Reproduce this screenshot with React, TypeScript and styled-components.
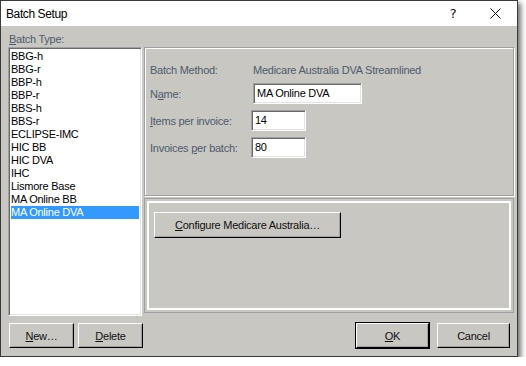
import React from "react";
import styled, { createGlobalStyle } from "styled-components";

const GlobalStyle = createGlobalStyle`
  html, body {
    margin: 0;
    padding: 0;
    background: #ffffff;
  }
  body {
    font-family: "Liberation Sans", Arial, sans-serif;
    font-size: 11px;
    letter-spacing: -0.25px;
  }
  u {
    text-decoration-thickness: 1px;
    text-underline-offset: 1px;
  }
`;

const batchTypes = [
  "BBG-h",
  "BBG-r",
  "BBP-h",
  "BBP-r",
  "BBS-h",
  "BBS-r",
  "ECLIPSE-IMC",
  "HIC BB",
  "HIC DVA",
  "IHC",
  "Lismore Base",
  "MA Online BB",
  "MA Online DVA",
];

const App = () => {
  const selected = "MA Online DVA";

  return (
    <>
      <GlobalStyle />
      <S.Window>
        <S.TitleBar>
          <S.Title>Batch Setup</S.Title>
          <S.HelpButton>?</S.HelpButton>
          <S.CloseButton>
            <svg width="11" height="11" viewBox="0 0 11 11">
              <path d="M0.5 0.5 L10.5 10.5 M10.5 0.5 L0.5 10.5" stroke="#111" strokeWidth="1" fill="none" />
            </svg>
          </S.CloseButton>
        </S.TitleBar>
        <S.Body>
          <S.FieldLabel>
            <u>B</u>atch Type:
          </S.FieldLabel>
          <S.MainRow>
            <S.ListBox>
              {batchTypes.map((t) => (
                <S.ListItem key={t} $selected={t === selected}>
                  {t}
                </S.ListItem>
              ))}
            </S.ListBox>
            <S.RightColumn>
              <S.DetailsPanel>
                <S.FormGrid>
                  <S.FormLabel>Batch Method:</S.FormLabel>
                  <S.FormValue>Medicare Australia DVA Streamlined</S.FormValue>
                  <S.FormLabel>
                    N<u>a</u>me:
                  </S.FormLabel>
                  <S.TextBox $width={109} $shift={2}>MA Online DVA</S.TextBox>
                  <S.FormLabel>
                    <u>I</u>tems per invoice:
                  </S.FormLabel>
                  <S.TextBox $width={55}>14</S.TextBox>
                  <S.FormLabel>
                    Invoices <u>p</u>er batch:
                  </S.FormLabel>
                  <S.TextBox $width={55}>80</S.TextBox>
                </S.FormGrid>
              </S.DetailsPanel>
              <S.ConfigPanel>
                <S.ConfigInner>
                  <S.Button $width={187} $height={26}>
                    <u>C</u>onfigure Medicare Australia…
                  </S.Button>
                </S.ConfigInner>
              </S.ConfigPanel>
            </S.RightColumn>
          </S.MainRow>
          <S.ButtonRow>
            <S.ButtonGroup>
              <S.Button $width={65}>
                <u>N</u>ew…
              </S.Button>
              <S.Button $width={65}>
                <u>D</u>elete
              </S.Button>
            </S.ButtonGroup>
            <S.ButtonGroup>
              <S.Button $width={73} $default>
                <u>O</u>K
              </S.Button>
              <S.Button $width={73}>Cancel</S.Button>
            </S.ButtonGroup>
          </S.ButtonRow>
        </S.Body>
      </S.Window>
    </>
  );
};

export default App;

const S = {
  Window: styled.div`
    width: 518px;
    height: 357px;
    box-sizing: border-box;
    border: 1px solid #3a3a3a;
    background: #c8c7c1;
    display: flex;
    flex-direction: column;
    box-shadow: 3px 3px 5px rgba(0, 0, 0, 0.55);
  `,
  TitleBar: styled.div`
    height: 25px;
    background: #ffffff;
    display: flex;
    align-items: center;
    padding-left: 5px;
  `,
  Title: styled.div`
    flex: 1;
    font-family: "Liberation Sans", Arial, sans-serif;
    font-size: 12px;
    letter-spacing: -0.4px;
    color: #000;
  `,
  HelpButton: styled.div`
    width: 14px;
    margin-right: 30px;
    font-family: "DejaVu Sans", sans-serif;
    font-size: 13px;
    color: #111;
    text-align: center;
  `,
  CloseButton: styled.div`
    width: 11px;
    height: 11px;
    margin-right: 16px;
    display: flex;
  `,
  Body: styled.div`
    flex: 1;
    display: flex;
    flex-direction: column;
    padding: 6px 3px 8px 7px;
  `,
  FieldLabel: styled.div`
    height: 14px;
    line-height: 14px;
    margin-bottom: 1px;
    padding-left: 1px;
    color: #4e5b6d;
  `,
  MainRow: styled.div`
    display: flex;
    gap: 1px;
    height: 269px;
  `,
  ListBox: styled.div`
    width: 134px;
    box-sizing: border-box;
    background: #ffffff;
    border-top: 1px solid #a0a0a0;
    border-left: 1px solid #a0a0a0;
    border-right: 1px solid #ffffff;
    border-bottom: 1px solid #ffffff;
    box-shadow: inset 1px 1px 0 #696969, inset -1px -1px 0 #e3e3e3;
    padding: 2px 2px;
  `,
  ListItem: styled.div<{ $selected?: boolean }>`
    height: 13px;
    line-height: 13px;
    padding-left: 0;
    color: ${(p) => (p.$selected ? "#ffffff" : "#000000")};
    background: ${(p) => (p.$selected ? "#3399ff" : "transparent")};
    white-space: nowrap;
  `,
  RightColumn: styled.div`
    width: 370px;
    display: flex;
    flex-direction: column;
    gap: 1px;
    margin-left: 1px;
  `,
  DetailsPanel: styled.div`
    height: 149px;
    box-sizing: border-box;
    border: 1px solid #a0a0a0;
    box-shadow: inset 1px 1px 0 #ffffff, 1px 1px 0 #ffffff;
    padding: 14px 5px 0 5px;
  `,
  FormGrid: styled.div`
    display: grid;
    grid-template-columns: 101px auto;
    row-gap: 6px;
    align-items: center;
    grid-auto-rows: 21px;
    grid-template-rows: 15px;
  `,
  FormLabel: styled.div`
    color: #4e5b6d;
    white-space: nowrap;
  `,
  FormValue: styled.div`
    color: #4e5b6d;
    margin-left: 2px;
    white-space: nowrap;
  `,
  TextBox: styled.div<{ $width: number; $shift?: number }>`
    width: ${(p) => p.$width}px;
    height: 21px;
    margin-left: ${(p) => p.$shift || 0}px;
    box-sizing: border-box;
    background: #ffffff;
    border-top: 1px solid #a0a0a0;
    border-left: 1px solid #a0a0a0;
    border-right: 1px solid #ffffff;
    border-bottom: 1px solid #ffffff;
    box-shadow: inset 1px 1px 0 #696969, inset -1px -1px 0 #e3e3e3;
    padding-left: 3px;
    line-height: 19px;
    color: #000;
  `,
  ConfigPanel: styled.div`
    height: 115px;
    margin-top: 1px;
    box-sizing: border-box;
    border: 1px solid #a0a0a0;
    padding: 2px;
  `,
  ConfigInner: styled.div`
    height: 100%;
    box-sizing: border-box;
    border: 2px solid #ffffff;
    padding: 9px 0 0 5px;
  `,
  Button: styled.div<{ $width: number; $height?: number; $default?: boolean }>`
    width: ${(p) => p.$width}px;
    height: ${(p) => p.$height || 25}px;
    box-sizing: border-box;
    display: flex;
    align-items: center;
    justify-content: center;
    color: #111;
    background: #c8c7c1;
    border-top: 1px solid #ffffff;
    border-left: 1px solid #ffffff;
    border-right: 1px solid #000000;
    border-bottom: 1px solid #000000;
    box-shadow: ${(p) =>
      p.$default
        ? "inset -1px -1px 0 #a0a0a0, 0 0 0 1px #000000"
        : "inset -1px -1px 0 #a0a0a0"};
    white-space: nowrap;
  `,
  ButtonRow: styled.div`
    margin-top: 7px;
    display: flex;
    justify-content: space-between;
    padding-right: 4px;
    padding-left: 1px;
  `,
  ButtonGroup: styled.div`
    display: flex;
    gap: 4px;
    &:last-child {
      gap: 8px;
    }
  `,
};
